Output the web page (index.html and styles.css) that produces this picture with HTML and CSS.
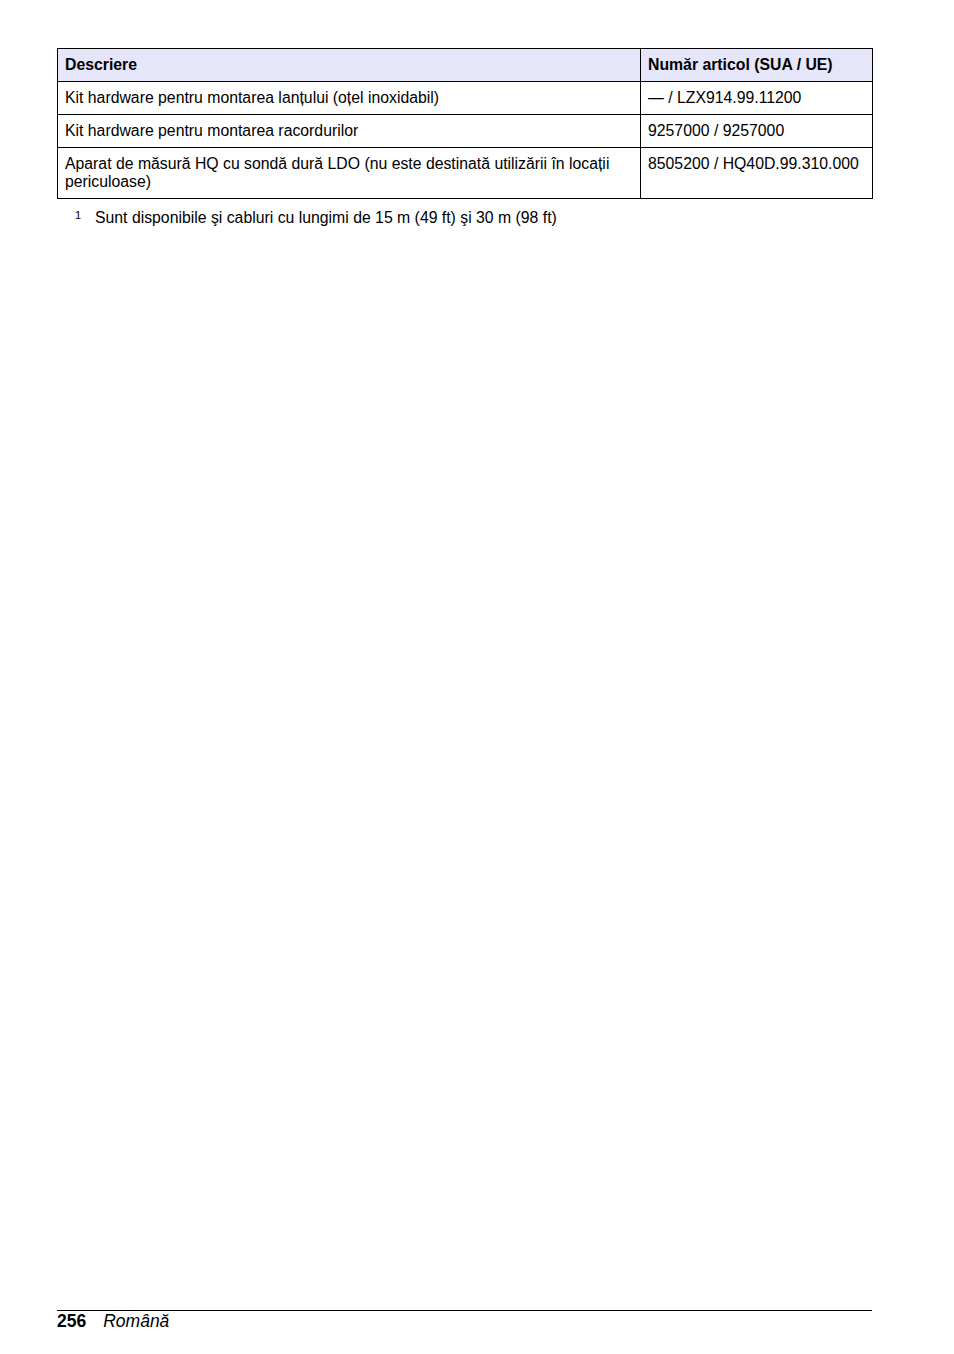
FILE: index.html
```html
<!DOCTYPE html>
<html lang="ro">
<head>
<meta charset="utf-8">
<link rel="stylesheet" href="styles.css">
</head>
<body>
<div class="page">
  <table class="parts">
    <thead>
      <tr><th class="c1">Descriere</th><th class="c2">Număr articol (SUA / UE)</th></tr>
    </thead>
    <tbody>
      <tr><td>Kit hardware pentru montarea lanțului (oțel inoxidabil)</td><td>— / LZX914.99.11200</td></tr>
      <tr><td>Kit hardware pentru montarea racordurilor</td><td>9257000 / 9257000</td></tr>
      <tr><td>Aparat de măsură HQ cu sondă dură LDO (nu este destinată utilizării în locații periculoase)</td><td>8505200 / HQ40D.99.310.000</td></tr>
    </tbody>
  </table>
  <div class="footnote"><span class="fn-num">1</span><span class="fn-text">Sunt disponibile şi cabluri cu lungimi de 15 m (49 ft) şi 30 m (98 ft)</span></div>
  <div class="spacer"></div>
  <div class="footer"><span class="pg">256</span><span class="lang">Română</span></div>
</div>
</body>
</html>
```
FILE: styles.css
```css
html, body { margin: 0; padding: 0; background: #fff; }
body { font-family: "Liberation Sans", Arial, sans-serif; color: #000; }
.page {
  width: 954px; height: 1354px; box-sizing: border-box;
  padding: 48px 81px 0 57px;
  display: flex; flex-direction: column;
}
.parts {
  width: 816px; border-collapse: collapse; font-size: 15.8px; line-height: 18px;
}
.parts th, .parts td {
  border: 1px solid #000; text-align: left; vertical-align: top;
  padding: 7px 7px 7px 7px;
}
.parts th { background: #e6e6fa; font-weight: bold; }
.parts .c1 { width: 568px; }
.footnote { display: flex; font-size: 15.8px; line-height: 18px; margin-top: 10px; }
.fn-num { font-size: 11px; line-height: 12px; width: 20px; padding-left: 18px; }
.spacer { flex: 1; }
.footer {
  border-top: 1px solid #000; margin-bottom: 23px; padding-top: 0px;
  font-size: 17.5px; line-height: 20px; display: flex; gap: 17px; width: 815px;
}
.pg { font-weight: bold; }
.lang { font-style: italic; }
```
